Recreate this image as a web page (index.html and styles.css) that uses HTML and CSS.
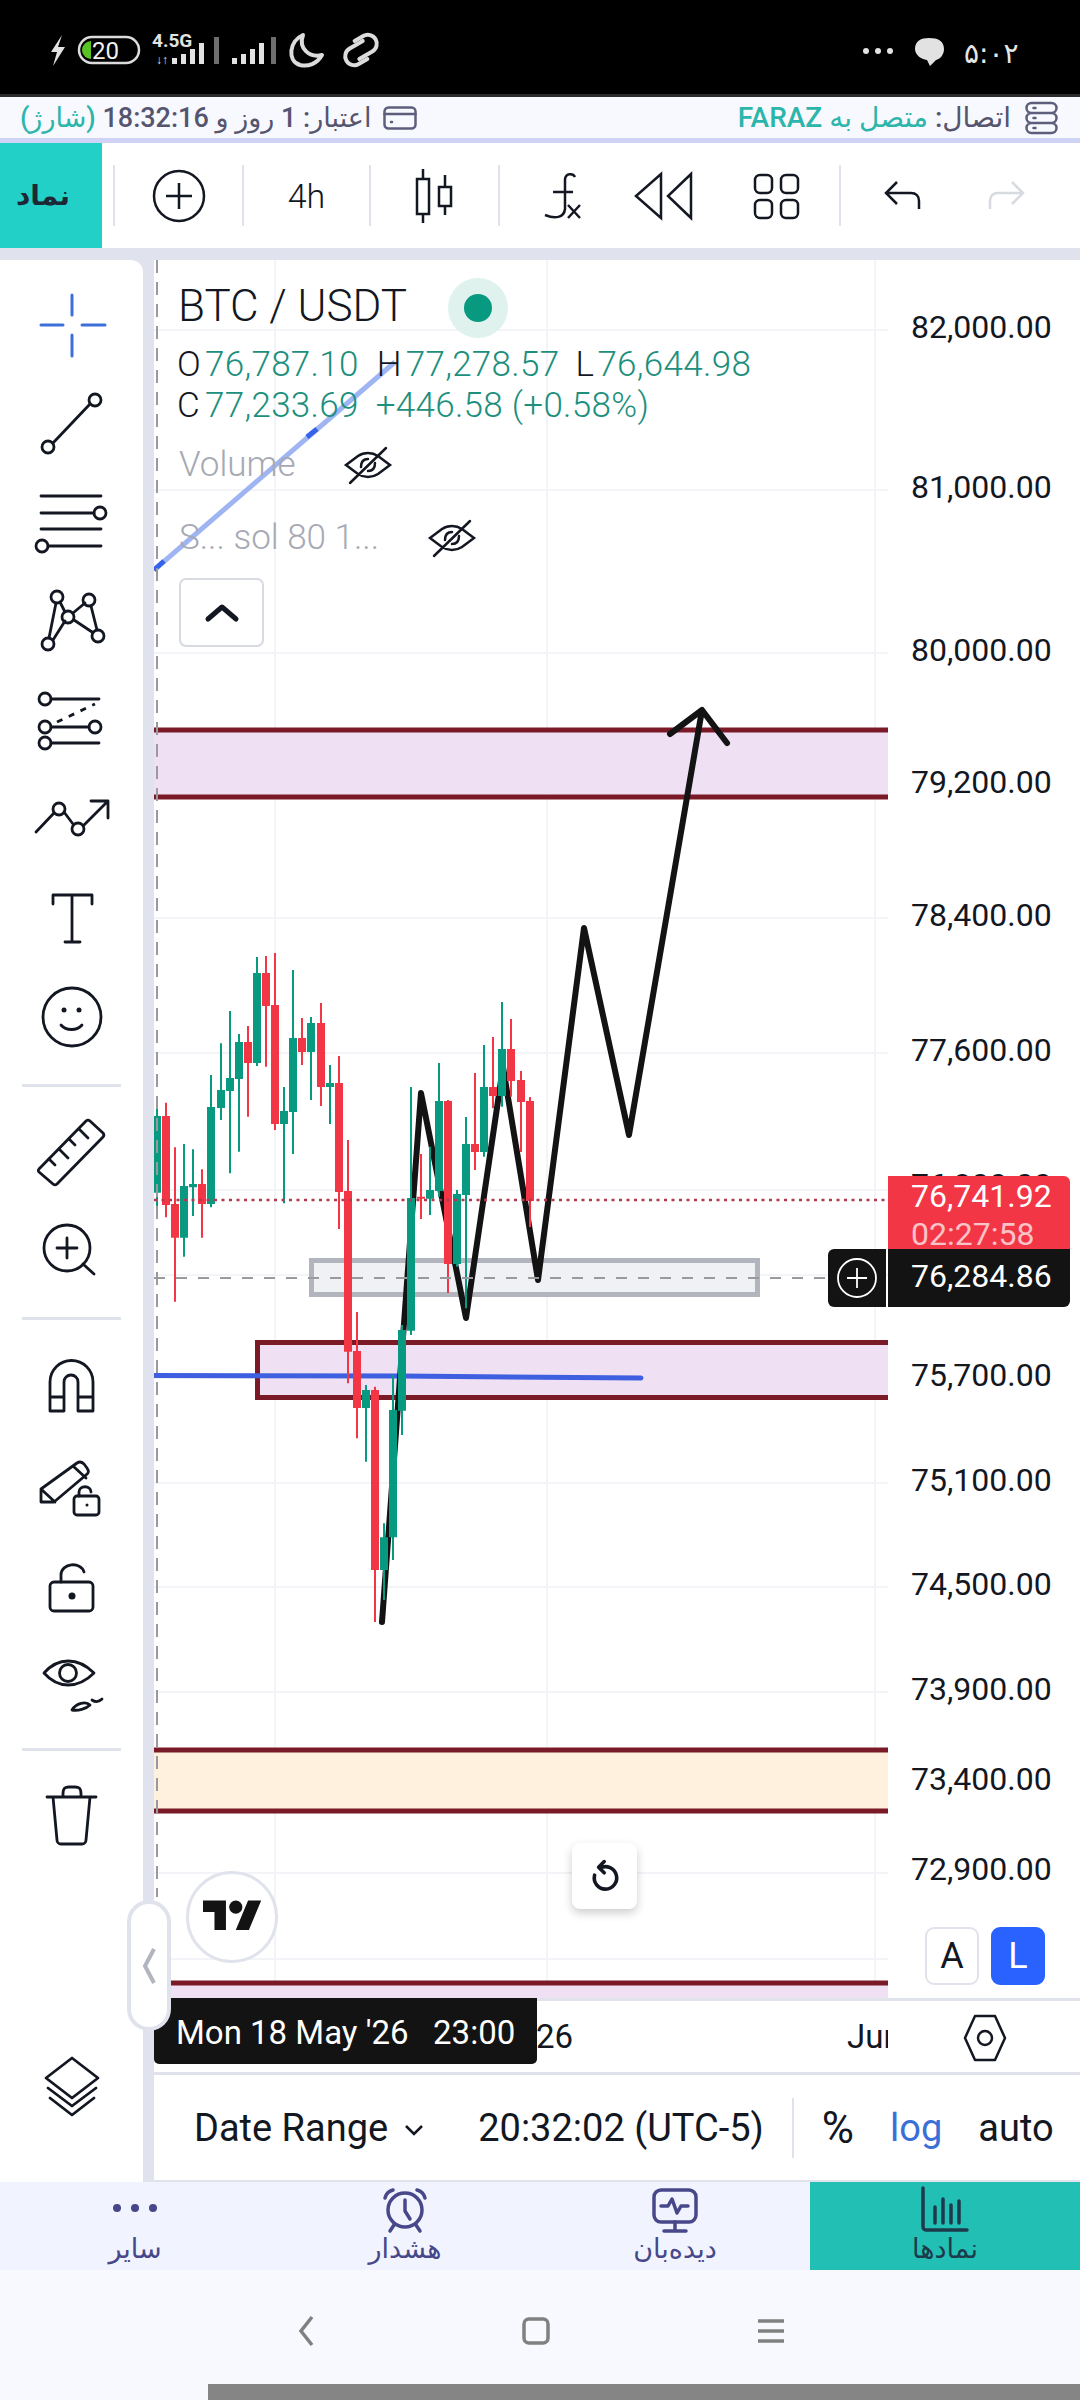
FILE: index.html
```html
<!DOCTYPE html>
<html lang="fa">
<head>
<meta charset="utf-8">
<title>BTC / USDT</title>
<link rel="stylesheet" href="styles.css">
</head>
<body>
<div class="app">
  <header class="status">
    <svg class="status-left" viewBox="0 0 400 94" width="400" height="94">
      <path class="st-fill" d="M62 35 51 52h6l-4 14 12-19h-7z"/>
      <rect class="st-line" x="79" y="37" width="60" height="26" rx="13"/>
      <path d="M91 41a9 9 0 0 0 0 18z" fill="#58c322"/>
      <text class="st-batt" x="92" y="59">20</text>
      <text class="st-net" x="152" y="47">4.5G</text>
      <text class="st-net small" x="156" y="64">↓↑</text>
      <path class="st-fill" d="M172 58h5v6h-5zM181 54h5v10h-5zM190 49h5v15h-5zM199 43h5v21h-5z"/>
      <path class="st-dim" d="M214 37h5v27h-5z"/>
      <path class="st-fill" d="M232 58h5v6h-5zM241 54h5v10h-5zM250 49h5v15h-5zM259 43h5v21h-5z"/>
      <path class="st-dim" d="M271 37h5v27h-5z"/>
      <path class="st-line thick" d="M303 35c-14 6-16 26-3 30 8 2 17-1 22-10-12 3-24-6-19-20z"/>
      <g transform="rotate(-30 361 50)">
        <path class="st-line thick" d="M367 43H352a9 9 0 0 0 0 18H362"/>
        <path class="st-line thick" d="M355 57H370a9 9 0 0 0 0-18H360"/>
      </g>
    </svg>
    <svg class="status-right" viewBox="850 0 230 94" width="230" height="94">
      <circle class="st-fill" cx="866" cy="51" r="3"/>
      <circle class="st-fill" cx="878" cy="51" r="3"/>
      <circle class="st-fill" cx="890" cy="51" r="3"/>
      <path class="st-fill" d="M929 38c9 0 15 3 15 11 0 6-4 10-8 11l-6 6-3-6c-6-1-12-5-12-11 0-8 6-11 14-11z"/>
      <text class="st-time" x="964" y="63">۵:۰۲</text>
    </svg>
  </header>

  <div class="info">
    <div class="info-group">
      <svg class="info-icon" viewBox="0 0 32 32" width="33" height="32"><path d="M6 1h20a4 4 0 0 1 0 10H6A4 4 0 0 1 6 1zM6 11h20a4 4 0 0 1 0 10H6a4 4 0 0 1 0-10zM6 21h20a4 4 0 0 1 0 10H6a4 4 0 0 1 0-10zM8 6h2M8 16h2M8 26h2"/></svg>
      <span class="info-text">اتصال: <span class="teal">متصل به FARAZ</span></span>
    </div>
    <div class="info-group credit">
      <svg class="info-icon" viewBox="0 0 34 24" width="34" height="24"><rect x="1.500" y="1.500" width="31" height="21" rx="4"/><path d="M1.500 8h31M8 16h1"/></svg>
      <span class="info-text">اعتبار: 1 روز و 18:32:16 <span class="teal">(شارژ)</span></span>
    </div>
  </div>

  <nav class="toolbar">
    <div class="symbol">نماد</div>
    <div class="sep"></div>
    <button class="tb tb-add" aria-label="add"><svg viewBox="0 0 56 56" width="56" height="56"><circle cx="28" cy="28" r="25"/><path d="M28 15v26M15 28h26"/></svg></button>
    <div class="sep"></div>
    <div class="tb tb-int">4h</div>
    <div class="sep"></div>
    <button class="tb tb-candle" aria-label="candles"><svg viewBox="416 166 42 58" width="42" height="58"><path d="M425 168v10M425 213v9M447 174v12M447 205v9"/><rect x="419" y="178" width="12" height="35"/><rect x="441" y="186" width="12" height="19"/></svg></button>
    <div class="sep"></div>
    <button class="tb tb-tools" aria-label="tools">
      <svg viewBox="540 166 295 58" width="295" height="58">
        <path d="M574 176c-2-4-9-4-10 2v30c-1 9-10 10-20 6M552 191h20"/>
        <path d="M567 204l12 13M579 204l-12 13"/>
        <path d="M660 173v44l-25-22zM690 173v44l-23-22z"/>
        <rect x="754" y="174" width="17" height="18" rx="5"/>
        <rect x="780" y="174" width="17" height="18" rx="5"/>
        <rect x="754" y="199" width="17" height="18" rx="5"/>
        <rect x="780" y="199" width="17" height="18" rx="5"/>
      </svg>
    </button>
    <div class="sep sep-last"></div>
    <button class="tb tb-undo" aria-label="undo"><svg viewBox="880 176 150 40" width="150" height="40"><path d="M920 209v-8c0-5-3-8-8-8h-25M898 182l-11 11 11 11"/><path class="off" d="M991 209v-8c0-5 3-8 8-8h25M1013 182l11 11-11 11"/></svg></button>
  </nav>

  <main class="main">
    <aside class="side">
      <div class="tools-group">
        <div class="tool"><svg viewBox="0 275 143 99" width="143" height="99"><path class="blue" d="M72 295v20M72 335v21M41 325h22M82 325h23"/></svg></div>
        <div class="tool"><svg viewBox="0 374 143 99" width="143" height="99"><path d="M53 443l37-39"/><circle cx="48" cy="447" r="6"/><circle cx="95" cy="400" r="6"/></svg></div>
        <div class="tool"><svg viewBox="0 473 143 99" width="143" height="99"><path d="M41 496h60M41 513h53M41 529h60M48 546h53"/><circle cx="100" cy="513" r="6"/><circle cx="42" cy="546" r="6"/></svg></div>
        <div class="tool"><svg viewBox="0 572 143 99" width="143" height="99"><path d="M56 603l-7 35M60 602l5 10M53 640l12-19M73 613l12-10M74 620l18 12M91 606l6 24"/><circle cx="57" cy="597" r="6"/><circle cx="89" cy="600" r="6"/><circle cx="68" cy="617" r="6"/><circle cx="48" cy="644" r="6"/><circle cx="98" cy="636" r="6"/></svg></div>
        <div class="tool"><svg viewBox="0 671 143 99" width="143" height="99"><path d="M51 699h48M51 727h38M51 743h48"/><path class="dash" d="M57 722l38-18"/><circle cx="45" cy="699" r="6"/><circle cx="45" cy="727" r="6"/><circle cx="95" cy="727" r="6"/><circle cx="45" cy="743" r="6"/></svg></div>
        <div class="tool"><svg viewBox="0 770 143 99" width="143" height="99"><path d="M36 832l18-19M64 812l9 12M84 825l24-24M91 801h17v17"/><circle cx="59" cy="809" r="6"/><circle cx="78" cy="829" r="6"/></svg></div>
        <div class="tool"><svg viewBox="0 869 143 99" width="143" height="99"><path d="M53 904v-9h39v9M72 895v47M65 942h15"/></svg></div>
        <div class="tool"><svg viewBox="0 968 143 99" width="143" height="99"><circle cx="72" cy="1017" r="29"/><path d="M61 1025c5 6 16 6 21 0"/><circle class="solid" cx="64" cy="1010" r="2.5"/><circle class="solid" cx="79" cy="1010" r="2.5"/></svg></div>
      </div>
      <div class="side-sep first"></div>
      <div class="tools-group">
        <div class="tool"><svg viewBox="0 1087 143 115" width="143" height="115"><path d="M39 1169 86 1121a3 3 0 0 1 4 0L103 1133a3 3 0 0 1 0 4L57 1184a3 3 0 0 1-4 0L39 1172a2 2 0 0 1 0-3z"/><path d="M49 1159l6 6M59 1149l9 9M69 1139l6 6M79 1129l9 9"/></svg></div>
        <div class="tool"><svg viewBox="0 1202 143 115" width="143" height="115"><circle cx="67" cy="1248" r="23"/><path d="M67 1238v20M57 1248h20M83 1264l11 10"/></svg></div>
      </div>
      <div class="side-sep"></div>
      <div class="tools-group">
        <div class="tool"><svg viewBox="0 1320 143 107" width="143" height="107"><path d="M50 1411v-29a21 21 0 0 1 43 0v29H78v-29a7 7 0 0 0-14 0v29zM50 1397h14M78 1397h15"/></svg></div>
        <div class="tool"><svg viewBox="0 1427 143 107" width="143" height="107"><path d="M41 1502v-13l36-26c3-2 5-1 7 1l3 4c2 3 2 5-1 7l-32 27zM41 1489l14 13M73 1466l13 12"/><rect x="74" y="1496" width="25" height="19" rx="3"/><path d="M79 1496v-4c0-7 12-7 12 0"/><circle class="solid" cx="87" cy="1505" r="1.5"/></svg></div>
        <div class="tool"><svg viewBox="0 1534 143 107" width="143" height="107"><rect x="50" y="1582" width="43" height="29" rx="4"/><path d="M61 1582v-7c0-12 20-14 23-3"/><circle class="solid" cx="72" cy="1596" r="3.5"/></svg></div>
        <div class="tool"><svg viewBox="0 1641 143 107" width="143" height="107"><path d="M44 1673c14-16 34-16 50 0-16 16-36 16-50 0z"/><circle cx="68" cy="1673" r="8.5"/><path d="M72 1710c4-7 14-9 18-5-4 4-12 6-18 5zM92 1700c3 2 7 2 10-1"/></svg></div>
      </div>
      <div class="side-sep"></div>
      <div class="tool tool-trash"><svg viewBox="0 1751 143 130" width="143" height="130"><path d="M47 1797h49M53 1797l4 43a4 4 0 0 0 4 4h21a4 4 0 0 0 4-4l4-43M63 1797v-3c0-6 2-7 6-7h6c4 0 6 1 6 7v3"/></svg></div>
      <div class="spacer"></div>
      <div class="tool tool-layers"><svg viewBox="0 2037 143 100" width="143" height="100"><path d="M72 2058l26 20-26 20-26-20zM48 2088l24 18 24-18M50 2098l22 17 22-17"/></svg></div>
    </aside>

    <section class="chart">
      <div class="pane">
        <svg class="canvas" viewBox="154 260 926 1738" width="926" height="1738">
          <path class="grid" d="M154 330H888M154 490H888M154 653H888M154 785H888M154 918H888M154 1053H888M154 1190H888M154 1275H888M154 1378H888M154 1483H888M154 1587H888M154 1692H888M154 1782H888M154 1873H888M154 1959H888M275 260V1998M547 260V1998M875 260V1998"/>

          <rect class="zone-purple" x="154" y="730" width="734" height="67"/>
          <path class="zone-line" d="M154 730H888M154 797H888"/>
          <rect class="zone-purple" x="257" y="1342" width="631" height="56"/>
          <path class="zone-line" d="M888 1342.5H257.500V1397.500H888"/>
          <rect class="zone-gray" x="311.500" y="1260.500" width="446" height="34"/>
          <rect class="zone-orange" x="154" y="1750" width="734" height="61"/>
          <path class="zone-line" d="M154 1750H888M154 1811H888"/>
          <rect class="zone-purple" x="154" y="1983" width="734" height="15"/>
          <path class="zone-line" d="M154 1983H888"/>

          <path class="trend-light" d="M154 570 395 362"/>
          <path class="trend-dark" d="M154 570 164 561M307 437 317 429"/>
          <path class="trend-blue" d="M154 1375.500 400 1376 641 1378"/>
          <path class="drawing" d="M382 1622 421 1093 466 1318 503 1067 538 1280 584 928 629 1135 702 710M670 734 702 710 727 743"/>

          <g transform="translate(150 920) scale(.33333)">
            <path class="wick up" d="M21 565V885M102 672V1010M129 688V888M183 465V862M213 370V600M240 273V760M267 342V695M321 111V438M402 501V850M429 150V702M483 291V540M540 435V612M648 1395V1625M702 1810V2040M729 1365V1920M756 1215V1545M783 501V1245M840 680V885M867 429V830M921 810V1040M948 591V1165M1002 375V710M1056 246V560"/>
            <path class="wick dn" d="M48 548V892M75 682V1145M156 748V953M294 318V590M348 108V440M375 99V630M456 294V435M513 249V558M567 408V927M594 660V1390M621 1176V1555M675 1400V2106M813 702V897M894 540V1119M975 459V750M1029 351V565M1083 297V530M1113 453V696M1140 531V921"/>
            <path class="body up" d="M21 588V818M102 798V953M129 792V802M183 561V852M213 510V564M240 474V513M267 366V477M321 159V429M402 573V612M429 354V576M483 309V396M540 489V501M648 1410V1464M702 1852V1950M729 1470V1852M756 1230V1472M783 834V1232M840 810V836M867 543V813M921 822V1032M948 672V825M1002 501V696M1056 387V528"/>
            <path class="body dn" d="M48 588V855M75 852V953M156 792V852M294 366V429M348 159V258M375 255V612M456 354V396M513 309V501M567 489V816M594 813V1295M621 1293V1464M675 1410V1950M813 830V836M894 543V1032M975 672V696M1029 501V528M1083 387V483M1113 480V546M1140 543V843"/>
          </g>

          <path class="dash-v" d="M157 260V1897"/>
          <path class="dot-red" d="M154 1200H888"/>
          <path class="dash-h" d="M154 1278H825"/>

          <g class="prices">
            <text x="911" y="338">82,000.00</text>
            <text x="911" y="498">81,000.00</text>
            <text x="911" y="661">80,000.00</text>
            <text x="911" y="793">79,200.00</text>
            <text x="911" y="926">78,400.00</text>
            <text x="911" y="1061">77,600.00</text>
            <text x="911" y="1196">76,800.00</text>
            <text x="911" y="1386">75,700.00</text>
            <text x="911" y="1491">75,100.00</text>
            <text x="911" y="1595">74,500.00</text>
            <text x="911" y="1700">73,900.00</text>
            <text x="911" y="1790">73,400.00</text>
            <text x="911" y="1880">72,900.00</text>
          </g>
        </svg>

        <div class="legend">
          <div class="legend-title"><span>BTC / USDT</span><span class="live"><i></i></span></div>
          <div class="ohlc r1"><b>O</b><span class="v1">76,787.10</span><b class="hh">H</b><span class="v1">77,278.57</span><b class="ll">L</b><span>76,644.98</span></div>
          <div class="ohlc r2"><b>C</b><span class="v1">77,233.69</span><span class="chg">+446.58 (+0.58%)</span></div>
          <div class="study s1"><span>Volume</span><svg viewBox="0 0 50 40" width="50" height="40"><path d="M3 20 15 11c6-4 14-4 20 0l12 9-12 9c-6 4-14 4-20 0zM18 22c0-6 3-8 7-8M32 18c0 6-3 8-7 8M7 38 43 3"/></svg></div>
          <div class="study s2"><span>S... sol 80 1...</span><svg viewBox="0 0 50 40" width="50" height="40"><path d="M3 20 15 11c6-4 14-4 20 0l12 9-12 9c-6 4-14 4-20 0zM18 22c0-6 3-8 7-8M32 18c0 6-3 8-7 8M7 38 43 3"/></svg></div>
          <div class="collapse"><svg viewBox="0 0 34 20" width="34" height="20"><path d="M3 16 17 4 31 16"/></svg></div>
        </div>

        <div class="tag-red"><span>76,741.92</span><span class="countdown">02:27:58</span></div>
        <div class="tag-black"><div class="tag-plus"><svg viewBox="0 0 40 40" width="40" height="40"><circle cx="20" cy="20" r="19"/><path d="M20 10v20M10 20h20"/></svg></div><div class="tag-value">76,284.86</div></div>

        <div class="reset"><svg viewBox="0 0 40 40" width="32" height="32"><path d="M14 10a14 14 0 1 1-7 9M19 2 12 9l7 7"/></svg></div>
        <div class="tv-logo"><svg viewBox="0 0 36 28" width="59" height="46"><path d="M14 22H7V11H0V4h14v18zM28 22h-8l7.500-18h8L28 22z"/><circle cx="20" cy="8" r="4"/></svg></div>
        <div class="scale-btns"><span class="sb">A</span><span class="sb on">L</span></div>
      </div>

      <div class="time-axis">
        <div class="ticks"><span class="tick t26">26</span><span class="tick tjun">Jun</span></div>
        <div class="time-tip">Mon 18 May '26&nbsp;&nbsp;&nbsp;23:00</div>
        <svg class="hex" viewBox="0 0 44 52" width="44" height="52"><path d="M12 4h20l10 22-10 22H12L2 26z"/><circle cx="22" cy="26" r="7"/></svg>
      </div>

      <div class="range-bar">
        <span class="range">Date Range</span>
        <svg class="caret" viewBox="0 0 20 12" width="20" height="12"><path d="M2 2 10 10 18 2"/></svg>
        <span class="clock">20:32:02 (UTC-5)</span>
        <span class="range-sep"></span>
        <span class="opt pct">%</span>
        <span class="opt blue-text">log</span>
        <span class="opt">auto</span>
      </div>
    </section>

    <div class="handle"><svg viewBox="0 0 16 38" width="16" height="38"><path d="M13 2 4 19l9 17"/></svg></div>
  </main>

  <nav class="tabs">
    <div class="tab">
      <svg viewBox="0 0 60 46" width="60" height="46"><circle cx="12" cy="21" r="4"/><circle cx="30" cy="21" r="4"/><circle cx="48" cy="21" r="4"/></svg>
      <span>سایر</span>
    </div>
    <div class="tab">
      <svg class="stroke" viewBox="0 0 60 46" width="60" height="46"><circle cx="30" cy="23" r="17"/><path d="M30 13v11l5 8M18 3c-4 1-7 4-8 8M42 3c4 1 7 4 8 8M19 38l-4 6M41 38l4 6"/></svg>
      <span>هشدار</span>
    </div>
    <div class="tab">
      <svg class="stroke" viewBox="0 0 60 46" width="60" height="46"><rect x="9" y="3" width="42" height="32" rx="7"/><path d="M30 35v7M19 44h22M16 19h7l4-7 5 14 4-7h7"/></svg>
      <span>دیده‌بان</span>
    </div>
    <div class="tab active">
      <svg class="stroke" viewBox="0 0 60 46" width="60" height="46"><path d="M8 1v38c0 3 1 4 4 4h40M20 20v16M28 12v24M36 18v18M44 14v22"/></svg>
      <span>نمادها</span>
    </div>
  </nav>

  <footer class="sysnav">
    <div class="sys-icons">
      <svg viewBox="0 0 20 34" width="20" height="34"><path d="M16 3 5 17l11 14"/></svg>
      <svg viewBox="0 0 30 30" width="30" height="30"><rect x="3" y="3" width="24" height="24" rx="5"/></svg>
      <svg viewBox="0 0 30 30" width="30" height="30"><path d="M2 5h26M2 15h26M2 25h26"/></svg>
    </div>
    <div class="gesture"></div>
  </footer>
</div>
</body>
</html>
```
FILE: styles.css
```css
* { box-sizing: border-box; }
html, body { margin: 0; padding: 0; }
body { width: 1080px; height: 2400px; overflow: hidden; background: #fff; font-family: Roboto, "DejaVu Sans", sans-serif; color: #131722; }
.app { display: flex; flex-direction: column; width: 1080px; height: 2400px; position: relative; }
button { background: none; border: 0; padding: 0; margin: 0; display: flex; }
svg { display: block; overflow: visible; }

/* status bar */
.status { height: 97px; flex: none; background: #000; border-bottom: 3px solid #2b2b2b; display: flex; justify-content: space-between; }
.st-fill { fill: #e2e2e2; }
.st-dim { fill: #6e6e6e; }
.st-line { fill: none; stroke: #dcdcdc; stroke-width: 2.500; }
.st-line.thick { stroke-width: 4; stroke-linecap: round; stroke-linejoin: round; }
.st-batt { fill: #f1f1f1; font: 400 24px Roboto, sans-serif; }
.st-net { fill: #e2e2e2; font: 700 19px Roboto, sans-serif; }
.st-net.small { font-size: 12px; }
.st-time { fill: #e6e6e6; font: 400 28px "DejaVu Sans", sans-serif; }

/* info row */
.info { height: 46px; flex: none; background: #f8f9fe; border-bottom: 5px solid #cfd3f6; display: flex; flex-direction: row-reverse; justify-content: space-between; align-items: center; padding: 0 22px 0 20px; }
.info-group { display: flex; align-items: center; gap: 14px; direction: rtl; }
.info-group.credit { gap: 12px; }
.info-icon { fill: none; stroke: #5d5d7c; stroke-width: 2.500; stroke-linecap: round; }
.info-text { font: 500 28px Roboto, "DejaVu Sans", sans-serif; color: #55556f; white-space: nowrap; }
.credit .info-text { font-size: 27px; }
.teal { color: #2bb5ab; }

/* toolbar */
.toolbar { height: 105px; flex: none; background: #fff; display: flex; align-items: center; }
.symbol { width: 102px; height: 105px; background: #22d0c8; color: #1d2836; font: 700 28px "DejaVu Sans", sans-serif; display: flex; align-items: center; justify-content: center; padding-right: 16px; margin-right: 11px; }
.sep { width: 2px; height: 61px; background: #e0e3eb; flex: none; }
.tb svg { fill: none; stroke: #131722; stroke-width: 2.500; }
.tb-add { width: 127px; justify-content: center; }
.tb-int { width: 125px; text-align: center; font: 300 34px Roboto, sans-serif; }
.tb-candle { width: 127px; justify-content: center; }
.tb-tools { width: 339px; padding-left: 41px; }
.tb-undo { padding-left: 38px; }
.tb-undo .off { stroke: #d8dae2; }

/* main */
.main { height: 1934px; flex: none; display: flex; background: #e0e3ee; padding-top: 12px; position: relative; }
.side { width: 143px; flex: none; margin-right: 11px; background: #fff; border-top-right-radius: 12px; display: flex; flex-direction: column; padding-top: 15px; }
.tool { flex: none; }
.side svg { fill: none; stroke: #131722; stroke-width: 2.800; stroke-linecap: round; stroke-linejoin: round; }
.side svg .blue { stroke: #3d6fd9; stroke-width: 3; }
.side svg .dash { stroke-dasharray: 6 7; stroke-linecap: butt; }
.side svg .solid { fill: #131722; stroke: none; }
.side-sep { height: 3px; flex: none; background: #e0e3eb; margin: 0 22px; }
.side-sep.first { margin-top: 17px; }
.spacer { flex: 1; }
.tool-layers { margin-bottom: 45px; }

.chart { width: 926px; flex: none; background: #fff; display: flex; flex-direction: column; }
.pane { height: 1738px; flex: none; position: relative; overflow: hidden; }
.canvas { position: absolute; left: 0; top: 0; overflow: hidden; }

.grid { stroke: #f3f4f7; stroke-width: 2; fill: none; }
.zone-purple { fill: #efe0f4; }
.zone-orange { fill: #fff1dd; }
.zone-line { stroke: #7a1a26; stroke-width: 5; fill: none; }
.zone-gray { fill: #f0f1f5; stroke: #b2b5be; stroke-width: 5; }
.trend-light { stroke: #9fb4f2; stroke-width: 5; fill: none; }
.trend-dark { stroke: #3563e9; stroke-width: 5; fill: none; }
.trend-blue { stroke: #3e5fe0; stroke-width: 5; fill: none; stroke-linecap: round; }
.drawing { stroke: #131313; stroke-width: 6; fill: none; stroke-linejoin: round; stroke-linecap: round; }
.wick { stroke-width: 6; fill: none; }
.body { stroke-width: 24; fill: none; }
.up { stroke: #089981; }
.dn { stroke: #f23645; }
.dash-v { stroke: #9a9a9e; stroke-width: 2; stroke-dasharray: 13 9; fill: none; }
.dash-h { stroke: #9a9a9e; stroke-width: 2; stroke-dasharray: 11 11; fill: none; }
.dot-red { stroke: #b23a50; stroke-width: 2.500; stroke-dasharray: 3 4.500; fill: none; }
.prices text { font: 400 32px Roboto, sans-serif; fill: #131722; }

.legend { position: absolute; left: 25px; top: 0; width: 640px; }
.legend-title { position: absolute; left: -1px; top: 14px; display: flex; align-items: center; font: 300 44px/52px Roboto, sans-serif; color: #131722; white-space: nowrap; }
.live { width: 60px; height: 60px; border-radius: 50%; background: #dff2ee; display: flex; align-items: center; justify-content: center; margin-left: 41px; margin-top: 4px; }
.live i { display: block; width: 28px; height: 28px; border-radius: 50%; background: #089981; }
.ohlc { position: absolute; left: -2px; white-space: nowrap; display: flex; font: 300 35px/40px Roboto, sans-serif; letter-spacing: .3px; color: #1c8f7d; }
.ohlc.r1 { top: 85px; }
.ohlc.r2 { top: 126px; }
.ohlc b { font-weight: 300; color: #131722; width: 28px; }
.ohlc .hh { margin-left: 18px; width: 29px; }
.ohlc .ll { margin-left: 16px; width: 22px; }
.chg { margin-left: 17px; }
.study { position: absolute; left: 0; display: flex; align-items: center; font: 300 35px/40px Roboto, sans-serif; color: #a6a9b3; white-space: nowrap; }
.study svg { fill: none; stroke: #131722; stroke-width: 2.500; stroke-linecap: round; }
.study.s1 { top: 185px; gap: 47px; }
.study.s2 { top: 258px; gap: 48px; }
.collapse { position: absolute; left: 0; top: 318px; width: 85px; height: 69px; border: 2px solid #d8dae1; border-radius: 7px; background: #fff; display: flex; align-items: center; justify-content: center; }
.collapse svg { fill: none; stroke: #131722; stroke-width: 5; stroke-linecap: round; stroke-linejoin: round; }

.tag-red { position: absolute; left: 734px; top: 916px; width: 182px; height: 76px; background: #f23645; border-radius: 0 6px 0 0; color: #fff; font: 400 32px/38px Roboto, sans-serif; padding-left: 23px; padding-top: 1px; display: flex; flex-direction: column; }
.countdown { color: #fbc2c7; }
.tag-black { position: absolute; left: 674px; top: 989px; height: 58px; display: flex; gap: 2px; color: #fff; }
.tag-plus { width: 58px; background: #131313; border-radius: 6px 0 0 6px; display: flex; align-items: center; justify-content: center; }
.tag-plus svg { fill: none; stroke: #fff; stroke-width: 1.800; }
.tag-value { width: 182px; background: #131313; border-radius: 0 0 6px 0; font: 400 32px/54px Roboto, sans-serif; padding-left: 23px; }

.reset { position: absolute; left: 418px; top: 1583px; width: 65px; height: 66px; background: #fff; border-radius: 8px; box-shadow: 0 4px 10px rgba(0,0,0,.2); display: flex; align-items: center; justify-content: center; }
.reset svg { fill: none; stroke: #131722; stroke-width: 4.500; stroke-linecap: round; stroke-linejoin: round; }
.tv-logo { position: absolute; left: 32px; top: 1611px; width: 92px; height: 92px; border-radius: 50%; border: 3px solid #e0e3eb; background: #fff; display: flex; align-items: center; justify-content: center; }
.tv-logo svg { fill: #131313; }
.scale-btns { position: absolute; left: 771px; top: 1667px; display: flex; gap: 12px; }
.sb { width: 54px; height: 58px; border-radius: 9px; border: 2px solid #e0e3eb; background: #fff; font: 400 36px/54px Roboto, sans-serif; text-align: center; }
.sb.on { background: #2962ff; border-color: #2962ff; color: #fff; }

.time-axis { height: 77px; flex: none; position: relative; border-top: 3px solid #e0e3eb; border-bottom: 3px solid #e0e3eb; }
.ticks { position: absolute; left: 0; top: 0; width: 734px; height: 71px; overflow: hidden; font: 400 33px/71px Roboto, sans-serif; }
.tick { position: absolute; top: 0; }
.t26 { left: 382px; }
.tjun { left: 693px; }
.time-tip { position: absolute; left: 0; top: -3px; width: 383px; height: 66px; background: #131313; color: #fff; border-radius: 0 0 5px 5px; font: 400 33px/70px Roboto, sans-serif; padding-left: 22px; white-space: nowrap; }
.hex { position: absolute; left: 809px; top: 11px; fill: none; stroke: #131722; stroke-width: 2.500; stroke-linejoin: round; }

.range-bar { flex: 1; display: flex; align-items: center; font: 400 38px Roboto, sans-serif; padding: 0 0 0 40px; position: relative; border-bottom: 2px solid #e0e3eb; }
.caret { margin-left: 16px; margin-top: 4px; fill: none; stroke: #131722; stroke-width: 2.500; flex: none; }
.clock { margin-left: 54px; }
.range-sep { width: 2px; height: 60px; background: #e0e3eb; margin: 0 28px 0 28px; flex: none; }
.opt { margin-right: 36px; }
.pct { font-size: 44px; }
.opt:last-child { margin-right: 0; }
.blue-text { color: #3b6fd8; }

.handle { position: absolute; left: 127px; top: 1652px; width: 44px; height: 131px; background: #fff; border: 4px solid #e0e3eb; border-radius: 22px; display: flex; align-items: center; justify-content: center; }
.handle svg { fill: none; stroke: #b2b5be; stroke-width: 4; }

/* tabs */
.tabs { height: 88px; flex: none; display: flex; background: #f1f4fe; color: #474789; }
.tab { width: 270px; display: flex; flex-direction: column; align-items: center; padding-top: 5px; font: 400 27px/31px "DejaVu Sans", sans-serif; direction: rtl; }
.tab svg { fill: #474789; flex: none; }
.tab svg.stroke { fill: none; stroke: #474789; stroke-width: 3.500; stroke-linecap: round; stroke-linejoin: round; }
.tab.active { background: #22bfb5; color: #1c3a4b; }
.tab.active svg.stroke { stroke: #1c3a4b; }

/* system nav */
.sysnav { height: 130px; flex: none; background: #f8f9ff; display: flex; flex-direction: column; }
.sys-icons { flex: 1; display: flex; align-items: center; padding: 8px 0 0 296px; gap: 205px; }
.sys-icons svg { fill: none; stroke: #808080; stroke-width: 3.500; }
.gesture { height: 16px; margin-left: 208px; background: #858585; flex: none; }
```
